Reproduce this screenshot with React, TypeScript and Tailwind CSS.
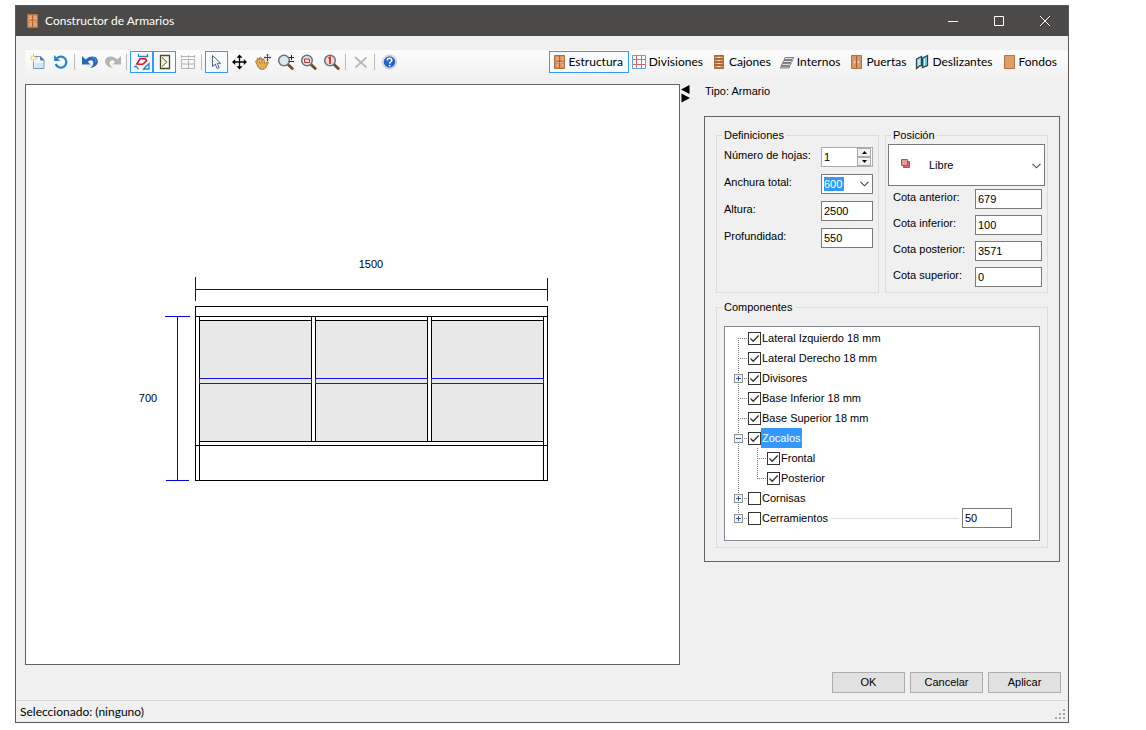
import { ReactNode, useState } from "react";
import clsx from "clsx";

type IconProps = { className?: string };

type TreeItem = {
    id: string;
    label: string;
    level: number;
    expander?: "plus" | "minus";
    first?: boolean;
    last?: boolean;
};

const treeItems: TreeItem[] = [
    { id: "izq", label: "Lateral Izquierdo 18 mm", level: 0, first: true },
    { id: "der", label: "Lateral Derecho 18 mm", level: 0 },
    { id: "div", label: "Divisores", level: 0, expander: "plus" },
    { id: "inf", label: "Base Inferior 18 mm", level: 0 },
    { id: "sup", label: "Base Superior 18 mm", level: 0 },
    { id: "zoc", label: "Zocalos", level: 0, expander: "minus" },
    { id: "fro", label: "Frontal", level: 1 },
    { id: "pos", label: "Posterior", level: 1, last: true },
    { id: "cor", label: "Cornisas", level: 0, expander: "plus" },
    { id: "cer", label: "Cerramientos", level: 0, expander: "plus", last: true },
];

const fieldClass =
    "h-5 border border-[#7a7a7a] bg-white px-[2px] text-[11px] text-black outline-none";

/* ---------- icons ---------- */

function Svg({ children, className }: { children: ReactNode; className?: string }) {
    return (
        <svg viewBox="0 0 16 16" className={clsx("size-4 shrink-0", className)} fill="none">
            {children}
        </svg>
    );
}

function CabinetIcon({ className }: IconProps) {
    return (
        <Svg className={className}>
            <path d="M2.500 1.500h10v13h-10z" fill="#d98f57" stroke="#b0703f" />
            <path d="M4 3h3v3H4zM9 3h3v3H9zM4 10h3v3H4zM9 10h3v3H9z" fill="#e6a673" />
            <path d="M7.500 2v12" stroke="#a9683a" />
            <path d="M6.500 7v2M8.500 7v2" stroke="#f4e2d2" />
            <path d="M6.500 7v1M8.500 7v1" stroke="#555" />
        </Svg>
    );
}

function DoorsIcon() {
    return (
        <Svg>
            <path d="M2.500 1.500h10v13h-10z" fill="#dd9763" stroke="#b37540" />
            <path d="M7.500 2v12" stroke="#a0642f" />
            <path d="M5 7h2v2H5zM8 7h2v2H8z" fill="#e8eef4" />
            <path d="M6 8h1M8 8h1" stroke="#666" />
        </Svg>
    );
}

function GridIcon() {
    return (
        <Svg>
            <path d="M.5 1.500h13v13H.5z" fill="#fff" stroke="#58a6d8" />
            <path d="M4.500 2v12M9.500 2v12M1 5.500h12M1 10.500h12" stroke="#d9666c" />
        </Svg>
    );
}

function DrawersIcon() {
    return (
        <Svg>
            <path d="M2.500 1.500h9v13h-9z" fill="#c97b43" stroke="#a9683a" />
            <path d="M3 3.500h8M3 6.500h8M3 9.500h8M3 12.500h8" stroke="#e9ab7b" />
            <path d="M3 5h8M3 8h8M3 11h8" stroke="#8f5227" />
            <path d="M6 3.500h2M6 6.500h2M6 9.500h2M6 12.500h2" stroke="#f8ecdf" />
        </Svg>
    );
}

function ShelvesIcon() {
    return (
        <Svg>
            <path
                d="M5 3.500h9l-1.500 2H4zM3.700 6.500h9l-1.500 2h-8.500zM2.200 9.500h9l-1.500 2H1.200zM1 12.500h9l-1 1.500H.2z"
                fill="#dcdcdc"
                stroke="#777"
                strokeWidth=".9"
            />
        </Svg>
    );
}

function SlidingIcon() {
    return (
        <Svg>
            <path d="M1.500 5l5-2.500v9l-2 .5-3 2.500z" fill="#8be4f5" stroke="#34444a" strokeWidth="1.300" />
            <path d="M7.500 4l5-2.500v10l-5 2z" fill="#63d3ea" stroke="#34444a" strokeWidth="1.300" />
            <path d="M9.500 5v6M4 6v5" stroke="#d8fbff" />
        </Svg>
    );
}

function BackPanelIcon() {
    return (
        <Svg>
            <path d="M2.500 1.500h10v13h-10z" fill="#df9b68" stroke="#b37540" />
        </Svg>
    );
}

function NewIcon() {
    return (
        <Svg>
            <path d="M3.500 2.500h7l3.500 3.500v8.500H3.500z" fill="#f2f7fd" stroke="#7890b8" />
            <path d="M5 9h8v5H5z" fill="#d5e3f6" />
            <path d="M10.500 2.500V6H14z" fill="#3f8ae0" stroke="#4a7fc4" />
            <path d="M3.500 0v8M0 4h7.500M1 1.500l5 5M6 1.500l-5 5" stroke="#e3c53c" />
            <circle cx="3.500" cy="4" r="1.600" fill="#fffbd0" />
        </Svg>
    );
}

function RefreshIcon() {
    return (
        <Svg>
            <path d="M4 4.200A5.500 5.500 0 1 1 2.700 10" stroke="#2583d8" strokeWidth="2.200" />
            <path d="M1.200 1v6h6z" fill="#2583d8" />
        </Svg>
    );
}

function UndoIcon() {
    return (
        <Svg>
            <path d="M0 2v8.500h8.500L5.900 8C8 5.300 11.500 6 11.300 9c-.1 2-1.300 3.600-3 5C12.500 13.500 16.300 10.500 15.800 6.800 15.200 2 8.500.8 3.600 5.500z" fill="#2468b8" />
            <path d="M10 3.800c2.500 0 4 1.500 3.800 4" stroke="#5aa0e6" />
        </Svg>
    );
}

function RedoIcon() {
    return (
        <Svg>
            <path d="M16 2v8.500H7.500L10.100 8C8 5.300 4.500 6 4.700 9c.1 2 1.300 3.600 3 5C3.500 13.500-.3 10.500.2 6.800.8 2 7.500.8 12.400 5.500z" fill="#b4b4b4" />
        </Svg>
    );
}

function ShapesIcon() {
    return (
        <Svg>
            <path d="M4.500 0v2.500h9V0" stroke="#1a8ac8" strokeWidth="1.300" />
            <path d="M2.800 10l3.400-5.200h5.300l1.200 2-4 3.500z" stroke="#e0101c" strokeWidth="1.500" />
            <path d="M0 12.500h2.500l2 3M9.500 15l5.500-5.500V15z" stroke="#1a8ac8" strokeWidth="1.300" />
        </Svg>
    );
}

function OpeningIcon() {
    return (
        <Svg>
            <path d="M3.500 1.500h9v13h-9z" fill="#fbfbf2" stroke="#4b4b26" strokeWidth="1.300" />
            <path d="M5 3.500L9.800 8 5 12.500" stroke="#4b4b26" />
        </Svg>
    );
}

function TableIcon() {
    return (
        <Svg>
            <path d="M1.500 5.500h13v9h-13zM8.500 5.500v9M1.500 10h13" stroke="#b4b4b4" />
            <path d="M1 2.500h14M1.500 1v3M8.500 1v3M14.500 1v3" stroke="#b4b4b4" />
        </Svg>
    );
}

function CursorIcon() {
    return (
        <Svg>
            <path d="M3.500 1.500v11l2.700-2.400 2 4.400 2-.9-2-4.300h3.500z" fill="#f7faff" stroke="#4b648c" />
        </Svg>
    );
}

function MoveIcon() {
    return (
        <Svg>
            <path d="M7.500 2v12M2 8h12" stroke="#000" strokeWidth="1.300" />
            <path d="M7.500.5l3 3.200h-6zM7.500 15.500l3-3.200h-6zM0 8l3.200-3v6zM15 8l-3.200-3v6z" fill="#000" />
        </Svg>
    );
}

function HandIcon() {
    return (
        <Svg>
            <path
                d="M.5 7.500c.3-1 1.300-.8 2 0L2 5c.2-1 1.300-1 1.800 0l.9 1-.2-2c.3-1 1.400-1 1.800 0l1 2.300.2-1.300c.7-.8 1.500-.3 1.500.5l.8 4 2-1.500c1-.5 2 .2 1.500 1L10.500 14c-1.500 1.800-5.500 1.800-7-.3z"
                fill="#e3ad57"
                stroke="#9a6524"
                strokeWidth=".8"
            />
            <path d="M4 8l1.500 2M6.500 7.500l1 2" stroke="#9a6524" strokeWidth=".7" />
            <path d="M12.500 0v7M9 3.500h7" stroke="#444" />
            <path d="M11.500 1h2M11.500 6h2M10 2.500v2M15 2.500v2" stroke="#444" strokeWidth=".8" />
        </Svg>
    );
}

function Lens({ children, fill }: { children: ReactNode; fill: string }) {
    return (
        <Svg>
            <path d="M10 10.500l4.200 4" stroke="#6e4c30" strokeWidth="2.800" strokeLinecap="round" />
            <circle cx="6" cy="6.500" r="5.300" fill={fill} stroke="#6d7478" strokeWidth="1.500" />
            {children}
        </Svg>
    );
}

function DeleteIcon() {
    return (
        <Svg>
            <path d="M2 3l11.500 10.500M13.500 3.500L2.500 13.500" stroke="#b9b9b9" strokeWidth="1.800" />
        </Svg>
    );
}

function HelpIcon() {
    return (
        <Svg>
            <circle cx="7.500" cy="8" r="7" fill="#e9eef5" stroke="#c2cad5" />
            <circle cx="7.500" cy="8" r="5.800" fill="#2464c4" />
            <path d="M5.300 6.500c0-3 4.600-2.800 4.500-.2C9.800 8 7.600 7.900 7.600 9.700" stroke="#fff" strokeWidth="1.600" />
            <path d="M6.800 10.800h1.700v1.600H6.800z" fill="#fff" />
        </Svg>
    );
}

function Chevron({ className }: IconProps) {
    return (
        <svg viewBox="0 0 9 6" className={clsx("h-[6px] w-[9px]", className)} fill="none">
            <path d="M.5.8l4 4 4-4" stroke="#444" strokeWidth="1.100" />
        </svg>
    );
}

/* ---------- toolbar ---------- */

type ToolProps = { label: string; active?: boolean; disabled?: boolean; children: ReactNode };

function Tool({ label, active, disabled, children }: ToolProps) {
    return (
        <button
            type="button"
            aria-label={label}
            disabled={disabled}
            className={clsx(
                "flex h-[22px] w-[23px] shrink-0 items-center justify-center border",
                active ? "border-[#3399ff] bg-[#f8fbff]" : "border-transparent"
            )}
        >
            {children}
        </button>
    );
}

function Separator() {
    return <span className="ml-[2px] mr-[3px] h-4 w-px shrink-0 bg-[#bdbdbd]" />;
}

function Tab({ label, active, children }: ToolProps) {
    return (
        <button
            type="button"
            className={clsx(
                "flex h-[22px] shrink-0 items-center gap-px border pl-[2px] pr-[5px] font-[Lato,sans-serif] text-[12px] leading-4 text-black",
                active ? "border-[#3399ff] bg-[#f8fbff]" : "border-transparent"
            )}
        >
            {children}
            {label}
        </button>
    );
}

function Toolbar() {
    return (
        <div className="mt-[14px] flex h-[30px] items-start justify-between rounded-tr-sm bg-linear-to-b from-[#fdfdfd] to-[#f0f0f0] pl-px pr-[5px] pt-px">
            <div className="flex items-center">
                <Tool label="Nuevo"><NewIcon /></Tool>
                <Tool label="Restablecer"><RefreshIcon /></Tool>
                <Separator />
                <Tool label="Deshacer"><UndoIcon /></Tool>
                <Tool label="Rehacer" disabled><RedoIcon /></Tool>
                <Separator />
                <Tool label="Formas" active><ShapesIcon /></Tool>
                <Tool label="Apertura" active><OpeningIcon /></Tool>
                <Tool label="Cotas" disabled><TableIcon /></Tool>
                <Separator />
                <Tool label="Seleccionar" active><CursorIcon /></Tool>
                <Tool label="Mover"><MoveIcon /></Tool>
                <Tool label="Encuadre"><HandIcon /></Tool>
                <Tool label="Zoom">
                    <Lens fill="#dbe8ee">
                        <path d="M13.500 1v5M11 3.500h5M11 7.500h5" stroke="#222" />
                    </Lens>
                </Tool>
                <Tool label="Zoom ventana">
                    <Lens fill="#dfe3e5">
                        <path d="M3.500 5h5v3.500h-5z" stroke="#c0343c" />
                    </Lens>
                </Tool>
                <Tool label="Zoom extensión">
                    <Lens fill="#ecd9da">
                        <path d="M4.500 4.500l1.500-1V10" stroke="#e02a30" strokeWidth="1.800" />
                    </Lens>
                </Tool>
                <Separator />
                <Tool label="Eliminar" disabled><DeleteIcon /></Tool>
                <Separator />
                <Tool label="Ayuda"><HelpIcon /></Tool>
            </div>
            <nav className="flex items-center">
                <Tab label="Estructura" active><CabinetIcon /></Tab>
                <Tab label="Divisiones"><GridIcon /></Tab>
                <Tab label="Cajones"><DrawersIcon /></Tab>
                <Tab label="Internos"><ShelvesIcon /></Tab>
                <Tab label="Puertas"><DoorsIcon /></Tab>
                <Tab label="Deslizantes"><SlidingIcon /></Tab>
                <Tab label="Fondos"><BackPanelIcon /></Tab>
            </nav>
        </div>
    );
}

/* ---------- drawing ---------- */

function CabinetDrawing() {
    return (
        <svg
            viewBox="138 256 429 237"
            className="h-[237px] w-[429px]"
            fill="none"
            shapeRendering="crispEdges"
        >
            <g stroke="#0000e6">
                <path d="M195.500 277v24M547.500 278v23M195 289.500h353" />
                <path d="M165 316.500h25M166 480.500h23M177.500 316v165" />
            </g>
            <path d="M199 320h113v122H199zM315 320h113v122H315zM431 320h113v122H431z" fill="#e8e8e8" />
            <g stroke="#000">
                <path d="M195.500 306.500h352v174h-352zM195 316.500h353M195 445.500h353" />
                <path d="M199.500 316v165M543.500 316v165" />
                <path d="M311.500 316v126M315.500 316v126M427.500 316v126M431.500 316v126" />
                <path d="M199 320.500h113M315 320.500h113M431 320.500h113M199 441.500h345" />
            </g>
            <path
                d="M199.500 378.500h112v5h-112zM315.500 378.500h112v5h-112zM431.500 378.500h112v5h-112z"
                stroke="#1414e6"
            />
            <g fill="#000" fontSize="11" fontFamily="'Liberation Sans', Arial, sans-serif">
                <text x="371" y="268" textAnchor="middle">1500</text>
                <text x="148" y="402" textAnchor="middle">700</text>
            </g>
        </svg>
    );
}

/* ---------- properties panel ---------- */

function Group({ title, className, children }: { title: string; className?: string; children: ReactNode }) {
    return (
        <fieldset className={clsx("min-w-0 border border-[#dcdcdc]", className)}>
            <legend className="px-[2px] leading-[14px]">{title}</legend>
            {children}
        </fieldset>
    );
}

function Cota({ id, label, value }: { id: string; label: string; value: string }) {
    return (
        <div className="flex items-start justify-between pl-[5px] pr-[3px]">
            <label htmlFor={id} className="leading-4">{label}</label>
            <input id={id} defaultValue={value} className={clsx(fieldClass, "w-[67px]")} />
        </div>
    );
}

function Definitions() {
    const [sheets, setSheets] = useState(1);
    return (
        <Group title="Definiciones" className="px-[5px]">
            <div className="mt-[5px] flex flex-col gap-[7px] pl-[2px]">
                <div className="flex items-start justify-between">
                    <label htmlFor="hojas" className="leading-4">Número de hojas:</label>
                    <div className="flex h-5 w-[52px] border border-[#abadb3] bg-white">
                        <input
                            id="hojas"
                            value={sheets}
                            onChange={(e) => setSheets(Number(e.target.value) || 0)}
                            className="w-0 flex-1 px-[2px] text-[11px] outline-none"
                        />
                        <div className="flex w-[15px] flex-col pr-px">
                            <button
                                type="button"
                                aria-label="Más"
                                onClick={() => setSheets(sheets + 1)}
                                className="flex flex-1 items-center justify-center border border-[#ababab] bg-[#f0f0f0]"
                            >
                                <svg viewBox="0 0 5 3" className="h-[3px] w-[5px]"><path d="M0 3L2.500 0 5 3z" /></svg>
                            </button>
                            <button
                                type="button"
                                aria-label="Menos"
                                onClick={() => setSheets(sheets - 1)}
                                className="flex flex-1 items-center justify-center border border-[#ababab] bg-[#f0f0f0]"
                            >
                                <svg viewBox="0 0 5 3" className="h-[3px] w-[5px]"><path d="M0 0h5L2.500 3z" /></svg>
                            </button>
                        </div>
                    </div>
                </div>
                <div className="flex items-start justify-between">
                    <label htmlFor="anchura" className="leading-4">Anchura total:</label>
                    <div className="flex h-5 w-[52px] items-center justify-between border border-[#7a7a7a] bg-white pl-[2px] pr-[3px]">
                        <input
                            id="anchura"
                            defaultValue="600"
                            className="h-[14px] w-5 bg-[#3399ff] text-[11px] text-white outline-none"
                        />
                        <button type="button" aria-label="Abrir lista"><Chevron /></button>
                    </div>
                </div>
                <div className="flex items-start justify-between">
                    <label htmlFor="altura" className="leading-4">Altura:</label>
                    <input id="altura" defaultValue="2500" className={clsx(fieldClass, "w-[52px]")} />
                </div>
                <div className="flex items-start justify-between">
                    <label htmlFor="prof" className="leading-4">Profundidad:</label>
                    <input id="prof" defaultValue="550" className={clsx(fieldClass, "w-[52px]")} />
                </div>
            </div>
        </Group>
    );
}

function Position() {
    return (
        <Group title="Posición" className="px-[2px] pb-[5px] [&>legend]:ml-[3px]">
            <div className="relative mt-[2px]">
                <select
                    aria-label="Posición"
                    className="h-[42px] w-full appearance-none border border-[#7a7a7a] bg-white pl-10 text-[11px] outline-none"
                >
                    <option>Libre</option>
                </select>
                <svg viewBox="0 0 9 9" className="pointer-events-none absolute left-[13px] top-[15px] size-[9px]">
                    <path d="M2.500 2.500h6v6h-6z" fill="#d9666c" stroke="#c24a52" />
                    <path d="M.5.5h6v6h-6z" fill="#e39a9e" stroke="#c24a52" />
                </svg>
                <Chevron className="pointer-events-none absolute right-1 top-[19px]" />
            </div>
            <div className="mt-[3px] flex flex-col gap-[6px]">
                <Cota id="anterior" label="Cota anterior:" value="679" />
                <Cota id="inferior" label="Cota inferior:" value="100" />
                <Cota id="posterior" label="Cota posterior:" value="3571" />
                <Cota id="superior" label="Cota superior:" value="0" />
            </div>
        </Group>
    );
}

type GuideProps = { expander?: "plus" | "minus"; top: number; bottom: number; branch?: boolean };

function Guide({ expander, top, bottom, branch = true }: GuideProps) {
    return (
        <svg viewBox="0 0 14 20" className="h-5 w-[14px] shrink-0" fill="none" shapeRendering="crispEdges">
            <path d={`M4.500 ${top}V${bottom}`} stroke="#808080" strokeDasharray="1 1" />
            {branch && <path d="M4 10.500h9" stroke="#808080" strokeDasharray="1 1" />}
            {expander && (
                <>
                    <path d="M.5 6.500h8v8h-8z" fill="#f4f4f4" stroke="#919191" />
                    <path d="M2 10.500h5" stroke="#3b55a0" />
                    {expander === "plus" && <path d="M4.500 8v5" stroke="#3b55a0" />}
                </>
            )}
        </svg>
    );
}

function ComponentTree() {
    const [checked, setChecked] = useState(["izq", "der", "div", "inf", "sup", "zoc", "fro", "pos"]);
    const [selected, setSelected] = useState("zoc");

    const toggle = (id: string) => {
        setChecked(checked.includes(id) ? checked.filter((c) => c !== id) : [...checked, id]);
        setSelected(id);
    };

    return (
        <ul className="mt-3 border border-[#828790] bg-white pb-3 pl-[9px] pr-[27px] pt-px">
            {treeItems.map((item) => (
                <li key={item.id} className="flex h-5 items-center">
                    {item.level > 0 && (
                        <span className="mr-[5px] flex">
                            <Guide top={0} bottom={20} branch={false} />
                        </span>
                    )}
                    <Guide expander={item.expander} top={item.first ? 10 : 0} bottom={item.last ? 11 : 20} />
                    <span className="relative flex shrink-0">
                        <input
                            id={item.id}
                            type="checkbox"
                            checked={checked.includes(item.id)}
                            onChange={() => toggle(item.id)}
                            className="peer size-[13px] appearance-none border border-[#333] bg-white"
                        />
                        <svg
                            viewBox="0 0 13 13"
                            className="pointer-events-none invisible absolute inset-0 size-[13px] peer-checked:visible"
                            fill="none"
                        >
                            <path d="M2.500 6.500L5.200 9.200 10.700 3.500" stroke="#333" strokeWidth="1.300" />
                        </svg>
                    </span>
                    <label
                        htmlFor={item.id}
                        className={clsx(
                            "h-5 shrink-0 px-px leading-5",
                            selected === item.id && "bg-[#3399ff] text-white"
                        )}
                    >
                        {item.label}
                    </label>
                    {item.id === "cer" && (
                        <>
                            <span className="ml-px mr-[3px] h-px flex-1 bg-[#d5dfe5]" />
                            <input
                                aria-label="Medida de cerramientos"
                                defaultValue="50"
                                className={clsx(fieldClass, "w-[50px]")}
                            />
                        </>
                    )}
                </li>
            ))}
        </ul>
    );
}

function Properties() {
    return (
        <aside className="w-[356px] shrink-0">
            <p className="h-8 pl-px leading-[14px]">Tipo: Armario</p>
            <div className="border border-[#646464] px-[11px] pb-[13px] pt-[11px]">
                <div className="grid grid-cols-2 gap-[6px]">
                    <Definitions />
                    <Position />
                </div>
                <Group title="Componentes" className="mt-[7px] px-[7px] pb-[6px] [&>legend]:-ml-[2px]">
                    <ComponentTree />
                </Group>
            </div>
        </aside>
    );
}

/* ---------- window ---------- */

function TitleBar() {
    return (
        <header className="flex h-[30px] items-center bg-[#4c4a48] pl-[9px] text-white">
            <CabinetIcon />
            <h1 className="ml-1 flex-1 font-[Lato,sans-serif] text-[12px]">
                Constructor de Armarios
            </h1>
            <button type="button" aria-label="Minimizar" className="flex h-full w-[46px] items-center justify-center">
                <svg viewBox="0 0 10 10" className="size-[10px]"><path d="M0 5.500h10" stroke="#fff" /></svg>
            </button>
            <button type="button" aria-label="Maximizar" className="flex h-full w-[46px] items-center justify-center">
                <svg viewBox="0 0 10 10" className="size-[10px]" fill="none"><path d="M.5.5h9v9h-9z" stroke="#fff" /></svg>
            </button>
            <button type="button" aria-label="Cerrar" className="flex h-full w-[46px] items-center justify-center">
                <svg viewBox="0 0 10 10" className="size-[10px]"><path d="M0 0l10 10M10 0L0 10" stroke="#fff" /></svg>
            </button>
        </header>
    );
}

function App() {
    return (
        <div className="flex min-h-screen bg-white pb-[7px] pl-[15px] pr-[77px] pt-[5px] font-['Liberation_Sans',Arial,sans-serif] text-[11px] text-black">
            <div className="flex flex-1 flex-col border border-[#5a5a5a] bg-[#f0f0f0]">
                <TitleBar />
                <div className="flex flex-1 flex-col pl-[9px]">
                    <Toolbar />
                    <main className="mt-[4px] flex flex-1 pr-2">
                        <div className="flex flex-1 items-center justify-center border border-[#646464] bg-white">
                            <CabinetDrawing />
                        </div>
                        <button type="button" aria-label="Plegar panel" className="ml-px mr-[14px] h-5 self-start">
                            <svg viewBox="0 0 9 20" className="h-5 w-[9px]">
                                <path d="M8.500 1v9L0 5.500zM.5 9.500v9L9 14z" />
                            </svg>
                        </button>
                        <Properties />
                    </main>
                    <div className="my-[7px] flex justify-end gap-[5px] pr-[7px]">
                        {["OK", "Cancelar", "Aplicar"].map((text) => (
                            <button
                                key={text}
                                type="button"
                                className="h-[21px] w-[73px] border border-[#adadad] bg-[#e1e1e1] pb-px leading-4"
                            >
                                {text}
                            </button>
                        ))}
                    </div>
                </div>
                <footer className="flex h-[22px] items-center justify-between border-t border-[#d7d7d7] pl-1 pr-[2px] font-[Lato,sans-serif] text-[12px]">
                    <span>Seleccionado: (ninguno)</span>
                    <svg viewBox="0 0 12 12" className="mt-1 size-3">
                        <path
                            d="M9 1h2v2H9zM5 5h2v2H5zM9 5h2v2H9zM1 9h2v2H1zM5 9h2v2H5zM9 9h2v2H9z"
                            fill="#a5a5a5"
                        />
                    </svg>
                </footer>
            </div>
        </div>
    );
}

export default App;
